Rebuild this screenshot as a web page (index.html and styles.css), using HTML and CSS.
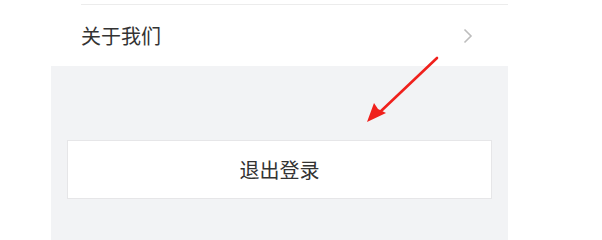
FILE: index.html
```html
<!DOCTYPE html>
<html lang="zh">
<head>
<meta charset="utf-8">
<link rel="stylesheet" href="styles.css">
</head>
<body>
<div class="panel">
  <div class="list">
    <div class="item">
      <span class="label">关于我们</span>
      <svg class="chev" width="10" height="16" viewBox="0 0 10 16"><path d="M1.5 1.5 L8 8 L1.5 14.5" fill="none" stroke="#bdbdbd" stroke-width="1.6"/></svg>
    </div>
  </div>
  <div class="gray">
    <div class="logout">退出登录</div>
  </div>
</div>
<svg class="arrow" width="602" height="240" viewBox="0 0 602 240">
  <path d="M437 58 L380 112" stroke="#f0201c" stroke-width="2.6" stroke-linecap="round" fill="none"/>
  <path d="M367 122 L374 103 L378 109 L386 113 Z" fill="#f0201c"/>
</svg>
</body>
</html>
```
FILE: styles.css
```css
html, body {
  margin: 0;
  padding: 0;
  background: #ffffff;
  width: 602px;
  height: 240px;
  overflow: hidden;
  font-family: "Noto Sans CJK SC", "Liberation Sans", sans-serif;
}
.panel {
  position: relative;
  width: 457px;
  margin-left: 51px;
  height: 240px;
  display: flex;
  flex-direction: column;
}
.list {
  background: #fff;
  padding-top: 4px;
}
.item {
  margin-left: 30px;
  border-top: 1px solid #ececec;
  height: 61px;
  display: flex;
  align-items: center;
  justify-content: space-between;
  padding-right: 35px;
}
.label {
  font-size: 20px;
  color: #333;
  line-height: 1;
  margin-top: 0;
}
.chev {
  display: block;
}
.gray {
  flex: 1;
  background: #f2f3f5;
  padding: 74px 16px 0;
}
.logout {
  height: 57px;
  background: #fff;
  border: 1px solid #e6e6e8;
  display: flex;
  align-items: center;
  justify-content: center;
  font-size: 20px;
  color: #333;
}
.arrow {
  position: absolute;
  left: 0;
  top: 0;
}
```
